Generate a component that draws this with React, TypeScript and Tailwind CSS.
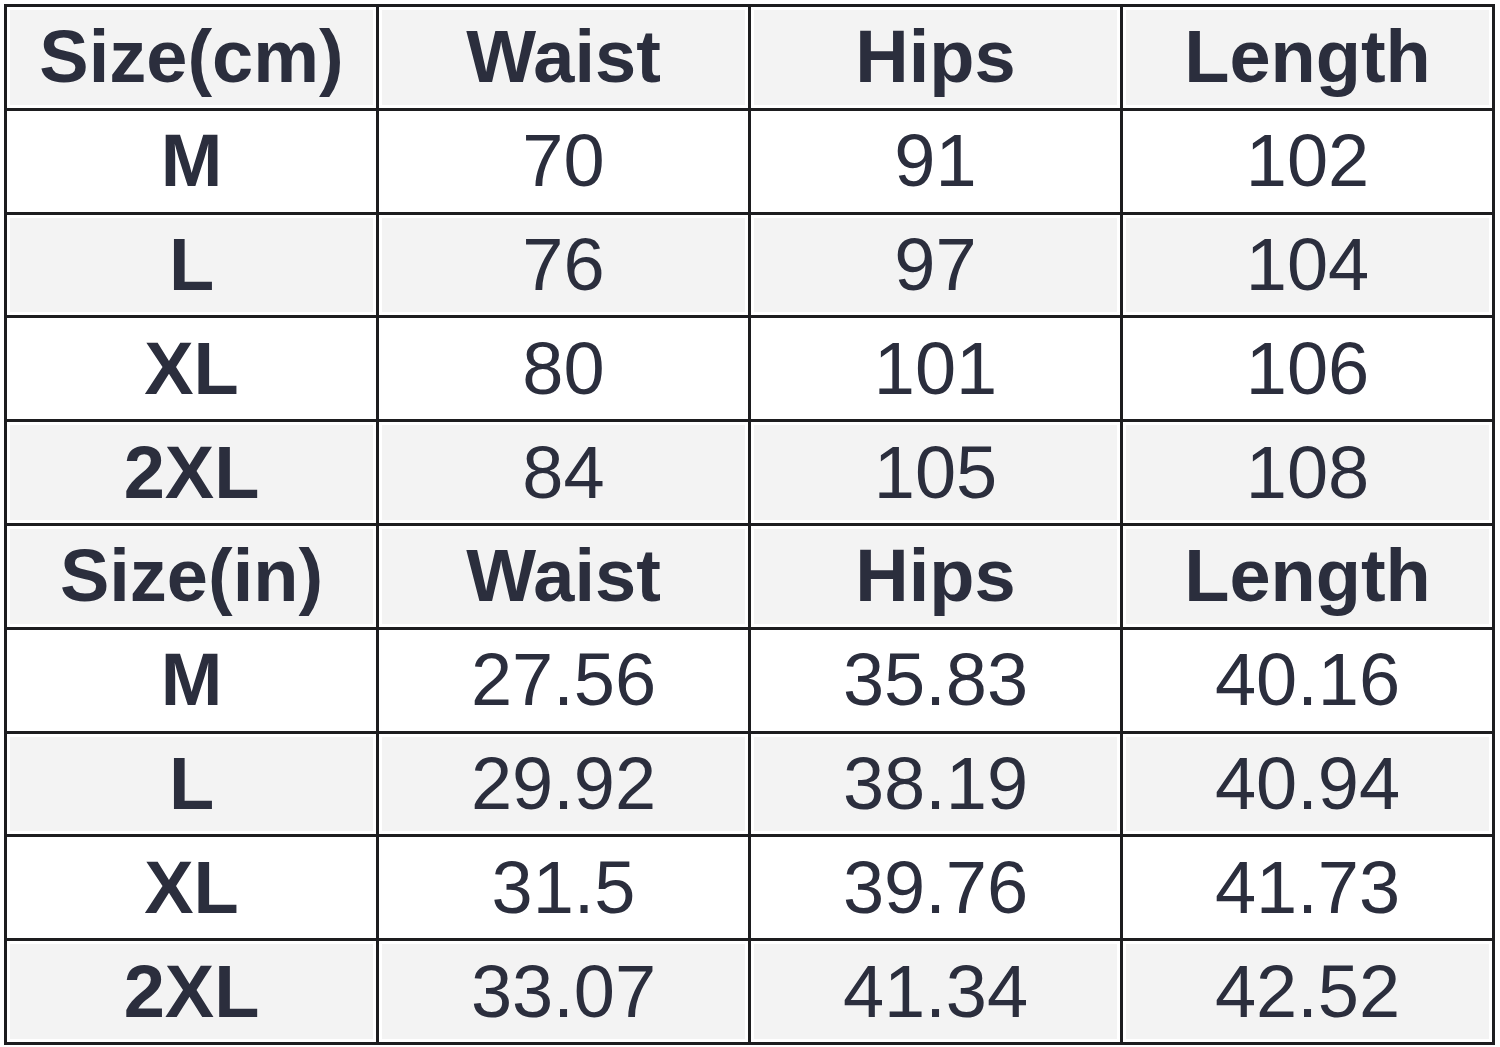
const cm = [
  ["M", "70", "91", "102"],
  ["L", "76", "97", "104"],
  ["XL", "80", "101", "106"],
  ["2XL", "84", "105", "108"],
];

const inch = [
  ["M", "27.56", "35.83", "40.16"],
  ["L", "29.92", "38.19", "40.94"],
  ["XL", "31.5", "39.76", "41.73"],
  ["2XL", "33.07", "41.34", "42.52"],
];

type Row = { cells: string[]; head: boolean; gray: boolean };

function buildRows(): Row[] {
  const rows: Row[] = [];
  rows.push({ cells: ["Size(cm)", "Waist", "Hips", "Length"], head: true, gray: true });
  cm.forEach((c, i) => rows.push({ cells: c, head: false, gray: i % 2 === 1 }));
  rows.push({ cells: ["Size(in)", "Waist", "Hips", "Length"], head: true, gray: true });
  inch.forEach((c, i) => rows.push({ cells: c, head: false, gray: i % 2 === 1 }));
  return rows;
}

export default function App() {
  const rows = buildRows();

  return (
    <div className="w-[1500px] h-[1047px] bg-white pt-[4px] pl-[4px] overflow-hidden">
      <table
        className="table-fixed border-collapse w-[1491px] h-[1038px] text-[#2b2e3d] text-[74px] leading-none"
        style={{ fontFamily: '"Liberation Sans", Arial, sans-serif' }}
      >
        <tbody>
          {rows.map((row, ri) => (
            <tr key={ri} className="h-[103.8px]">
              {row.cells.map((cell, ci) => (
                <td
                  key={ci}
                  className={`border-[3px] border-[#1d1d1f] text-center align-middle shadow-[inset_0_0_0_3px_#ffffff] ${
                    row.gray ? "bg-[#f3f3f3]" : "bg-white"
                  } ${row.head || ci === 0 ? "font-bold" : "font-normal"}`}
                >
                  {cell}
                </td>
              ))}
            </tr>
          ))}
        </tbody>
      </table>
    </div>
  );
}
